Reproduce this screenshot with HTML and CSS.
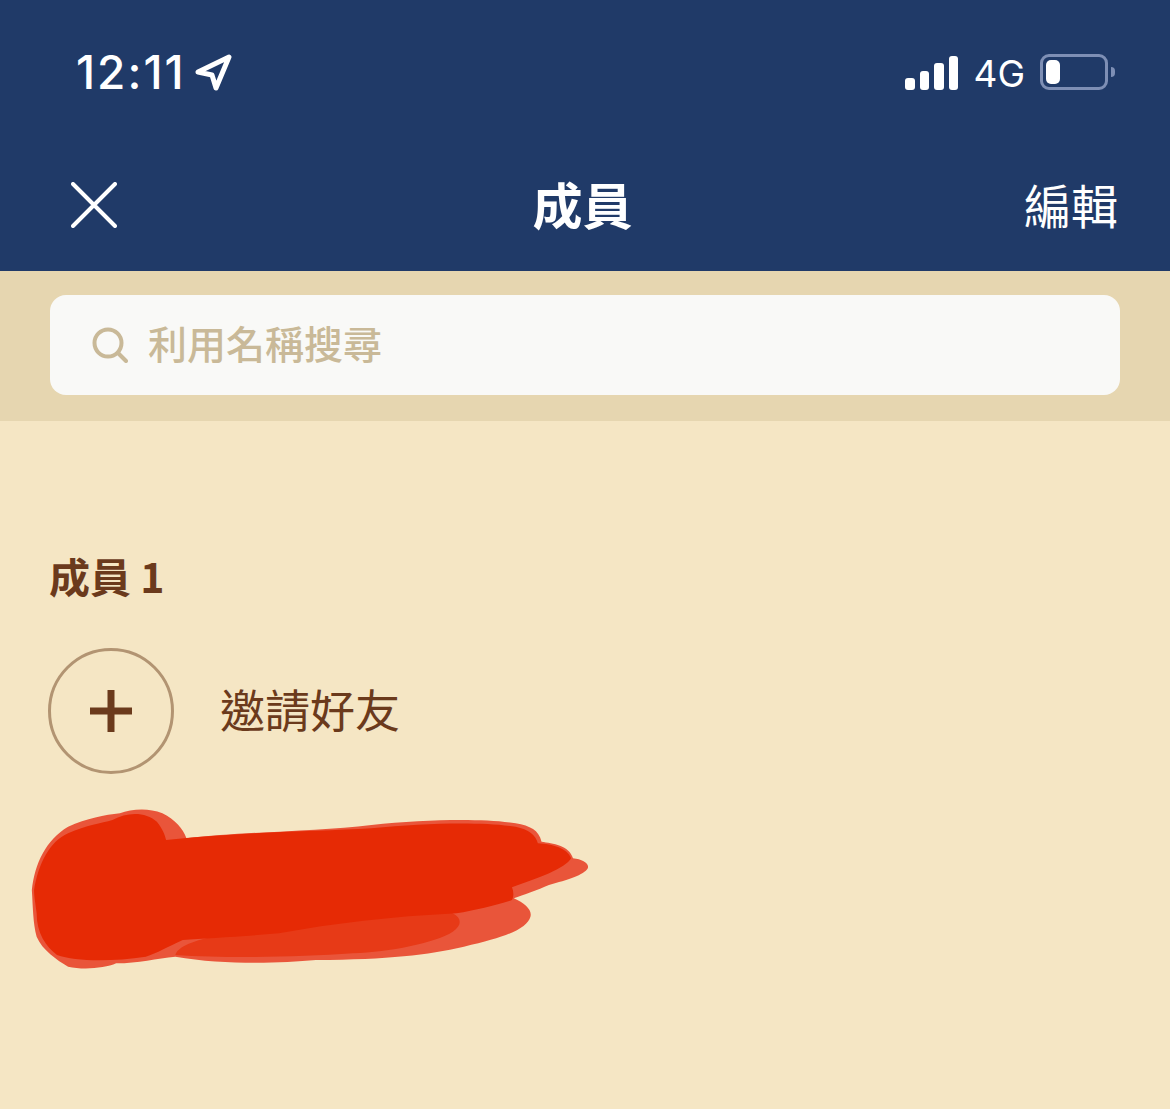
FILE: index.html
```html
<!DOCTYPE html>
<html lang="zh-Hant">
<head>
    <meta charset="UTF-8">
    <meta name="viewport" content="width=device-width,initial-scale=1">
    <title>成員</title>
    <link rel="stylesheet" href="styles.css">
</head>
<body>
<header class="top">
    <!-- Status bar -->
    <div class="status">
        <div class="status-left">
            <span class="time">12:11</span>
            <svg class="loc" width="38" height="38" viewBox="0 0 38 38" fill="none" stroke="#fff" stroke-width="5" stroke-linejoin="round"><path d="M3 19 34 4 21 35 17 22Z"/></svg>
        </div>
        <div class="status-right">
            <div class="signal">
                <span class="bar b1"></span>
                <span class="bar b2"></span>
                <span class="bar b3"></span>
                <span class="bar b4"></span>
            </div>
            <span class="net">4G</span>
            <div class="battery"><span class="level"></span></div>
            <span class="nub"></span>
        </div>
    </div>

    <!-- Nav bar -->
    <div class="nav">
        <svg class="close" width="46" height="46" viewBox="0 0 46 46" stroke="#fff" stroke-width="4" stroke-linecap="round"><path d="M2 2 44 44M44 2 2 44"/></svg>
        <h1 class="title">成員</h1>
        <a class="edit">編輯</a>
    </div>
</header>

<div class="search-band">
    <div class="search">
        <svg width="36" height="36" viewBox="0 0 36 36" fill="none" stroke="#c9b998" stroke-width="4" stroke-linecap="round"><circle cx="16" cy="16" r="13.5"/><path d="M26 26 34 34"/></svg>
        <span class="placeholder">利用名稱搜尋</span>
    </div>
</div>

<main class="members">
    <h2 class="count">成員 1</h2>
    <div class="invite">
        <div class="add">
            <svg width="42" height="42" viewBox="0 0 42 42" stroke="#6b3a1c" stroke-width="7"><path d="M0 21H42M21 0V42"/></svg>
        </div>
        <span class="invite-text">邀請好友</span>
    </div>

    <!-- Hand drawn cover over the member row -->
    <svg class="scribble" width="580" height="180" viewBox="0 0 1568 540" preserveAspectRatio="none">
        <path fill="#e9553a" d="M32 270C40 190 70 120 130 80C180 55 230 45 270 40C300 28 345 22 385 40C420 60 440 85 450 115C600 95 800 95 950 75C1100 58 1250 55 1340 70C1380 78 1402 90 1410 125C1440 130 1485 135 1495 175C1520 178 1540 190 1535 205C1525 225 1480 240 1430 255C1400 270 1360 285 1335 295C1365 310 1385 330 1380 350C1370 385 1320 410 1200 440C1100 465 1000 478 800 480C700 490 550 495 420 470C370 475 320 490 260 490C230 505 170 510 130 500C100 480 60 450 45 410C35 370 35 320 32 270Z"/>
        <path fill="#e73a17" d="M420 465C430 420 560 395 800 360C950 340 1100 325 1170 340C1195 355 1195 375 1170 395C1120 430 1000 455 900 460C750 472 560 475 420 465Z"/>
        <path fill="#e62a05" d="M38 270C50 190 80 125 130 100C180 75 220 70 250 60C290 35 340 35 370 65C385 85 392 105 395 120C600 95 800 95 950 85C1100 68 1250 65 1340 80C1375 88 1395 105 1400 130C1440 132 1480 145 1490 175C1475 205 1400 235 1330 262C1335 275 1335 290 1330 300C1290 315 1230 330 1180 340C1000 350 850 370 700 400C600 410 500 415 440 420C400 440 370 460 340 470C250 485 150 485 100 465C70 440 45 400 45 340C42 310 38 290 38 270Z"/>
    </svg>
</main>
</body>
</html>
```

FILE: styles.css
```css
:root{
    --c-navy:#203a68;
    --c-band:#e6d6b0;
    --c-bg:#f5e6c4;
    --c-brown:#6b3a1c;
    --c-hint:#c9b998;
}
*{box-sizing:border-box;margin:0;padding:0}
body{background:var(--c-bg);min-height:100vh;font-family:"Noto Sans CJK TC","Noto Sans",sans-serif}

.top{background:var(--c-navy);color:#fff}
.status{height:144px;display:flex;align-items:center;justify-content:space-between;padding:0 55px 0 76px}
.status-left{display:flex;align-items:center;gap:9px}
.time{font-family:Inter,"Liberation Sans",sans-serif;font-size:46px;font-weight:500;letter-spacing:2px}
.status-right{display:flex;align-items:center}
.signal{display:flex;align-items:flex-end;gap:5px;height:34px;margin-top:1px}
.bar{width:9.5px;background:#fff;border-radius:3px}
.b1{height:12px}
.b2{height:19px}
.b3{height:27px}
.b4{height:34px}
.net{font-family:Inter,"Liberation Sans",sans-serif;font-size:37px;margin:2px 0 0 15px}
.battery{width:68px;height:36px;margin:-1px 0 0 15px;padding:3px;border:3px solid #7e8fb5;border-radius:9px}
.level{display:block;width:14px;height:100%;background:#fff;border-radius:5px}
.nub{width:4px;height:10px;margin-left:3px;background:#7e8fb5;border-radius:0 5px 5px 0}

.nav{height:127px;display:grid;grid-template-columns:1fr auto 1fr;align-items:center;padding:0 52px 0 47px}
.close{margin:-5px 0 0 24px}
.title{font-size:50px;font-weight:700;line-height:1;margin-top:-10px}
.edit{justify-self:end;font-size:47px;line-height:1;margin-top:-9px}

.search-band{background:var(--c-band);padding:24px 50px 26px}
.search{height:100px;background:#f9f9f7;border-radius:16px;display:flex;align-items:center;gap:20px;padding:0 42px}
.placeholder{font-size:39px;font-weight:500;line-height:1;color:var(--c-hint);margin-top:-6px}

.members{position:relative;padding:132px 49px 0;height:688px}
.count{font-size:41px;font-weight:700;line-height:44px;color:var(--c-brown)}
.invite{display:flex;align-items:center;gap:46px;margin-top:51px}
.add{width:126px;height:126px;margin-left:-1px;border:3px solid #b29472;border-radius:50%;display:flex;align-items:center;justify-content:center}
.invite-text{font-size:45px;line-height:1;color:var(--c-brown);margin-top:-6px}
.scribble{position:absolute;left:20px;top:379px}
```
